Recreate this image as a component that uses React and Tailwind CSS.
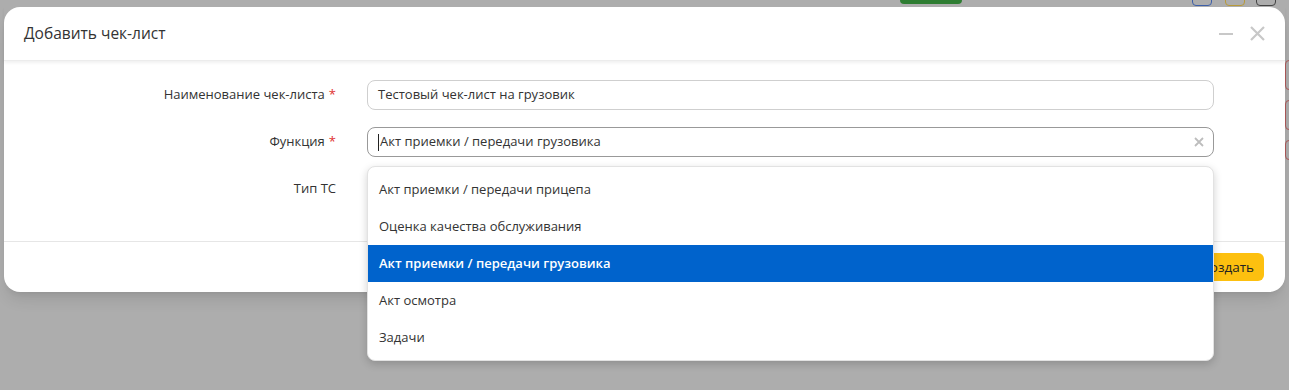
import React from 'react';

const options = [
  'Акт приемки / передачи прицепа',
  'Оценка качества обслуживания',
  'Акт приемки / передачи грузовика',
  'Акт осмотра',
  'Задачи',
];

const Label = ({ children, required }) => (
  <div className="w-[333px] text-right text-[13px] text-[#333] pr-[1px]">
    {children}
    {required && <span className="text-[#e03131] ml-1">*</span>}
  </div>
);

export default function App() {
  return (
    <div className="relative h-[390px] w-full overflow-hidden bg-[#adadad] pt-[7px] px-[4px]" style={{ fontFamily: '"Open Sans", "Noto Sans", sans-serif' }}>
      {/* фон страницы */}
      <div className="absolute top-0 left-[900px] h-[4px] w-[62px] rounded-b bg-[#2e7d32]" />
      <div className="absolute top-[-4px] left-[1192px] h-[10px] w-[20px] rounded border border-[#3d5fa8]" />
      <div className="absolute top-[-4px] left-[1225px] h-[10px] w-[20px] rounded border border-[#b89a3a]" />
      <div className="absolute top-[-4px] left-[1256px] h-[10px] w-[20px] rounded border border-[#444]" />
      <div className="absolute top-[60px] left-[1285px] h-[30px] w-[10px] rounded border border-[#b05a5a]" />
      <div className="absolute top-[100px] left-[1285px] h-[30px] w-[10px] rounded border border-[#b05a5a]" />
      <div className="absolute top-[140px] left-[1285px] h-[20px] w-[10px] rounded border border-[#b05a5a]" />

      {/* Модалка */}
      <div className="relative rounded-2xl bg-white shadow-lg">
        <div className="flex h-[54px] items-center justify-between pl-[20px] pr-[20px] shadow-[0_2px_3px_rgba(0,0,0,0.06)] border-b border-[#ececec]">
          <div className="text-[15.5px] text-[#333]">Добавить чек-лист</div>
          <div className="flex items-center gap-[17px] text-[#c8c8c8]">
            <svg width="14" height="14" viewBox="0 0 14 14"><path d="M0 7h14" stroke="currentColor" strokeWidth="2" /></svg>
            <svg width="15" height="15" viewBox="0 0 15 15"><path d="M1 1l13 13M14 1L1 14" stroke="currentColor" strokeWidth="2.2" /></svg>
          </div>
        </div>

        <div className="flex flex-col gap-[17px] pt-[19px] pb-[37px] pr-[71px]">
          <div className="flex items-center gap-[30px]">
            <Label required>Наименование чек-листа</Label>
            <div className="flex h-[30px] flex-1 items-center rounded-lg border border-[#cfcfcf] px-[10px] text-[13px] text-[#333]">
              Тестовый чек-лист на грузовик
            </div>
          </div>
          <div className="flex items-center gap-[30px]">
            <Label required>Функция</Label>
            <div className="relative flex h-[30px] flex-1 items-center rounded-lg border border-[#999] px-[10px] text-[13px] text-[#333]">
              <span className="mr-[1px] inline-block h-[17px] w-[1px] bg-[#222]" />
              Акт приемки / передачи грузовика
              <svg className="absolute right-[9px] text-[#bdbdbd]" width="10" height="10" viewBox="0 0 10 10"><path d="M1 1l8 8M9 1L1 9" stroke="currentColor" strokeWidth="1.8" /></svg>
            </div>
          </div>
          <div className="flex items-center gap-[30px]">
            <Label>Тип ТС</Label>
            <div className="h-[30px] flex-1 rounded-lg border border-[#cfcfcf]" />
          </div>
        </div>

        <div className="flex h-[51px] items-center justify-end border-t border-[#e6e6e6] pr-[21px]">
          <button className="h-[28px] rounded-md bg-[#fdc00f] px-[10px] text-[13.5px] text-[#222]">Создать</button>
        </div>
      </div>

      {/* Выпадающий список */}
      <div className="absolute left-[367px] top-[166px] w-[847px] rounded-lg border border-[#e2e2e2] bg-white py-[4px] shadow-[0_3px_8px_rgba(0,0,0,0.18)]">
        {options.map((o, i) => (
          <div
            key={o}
            className={`flex h-[37px] items-center px-[11px] text-[13px] ${i === 2 ? 'bg-[#0063cc] font-semibold text-white' : 'text-[#333]'}`}
          >
            {o}
          </div>
        ))}
      </div>
    </div>
  );
}
